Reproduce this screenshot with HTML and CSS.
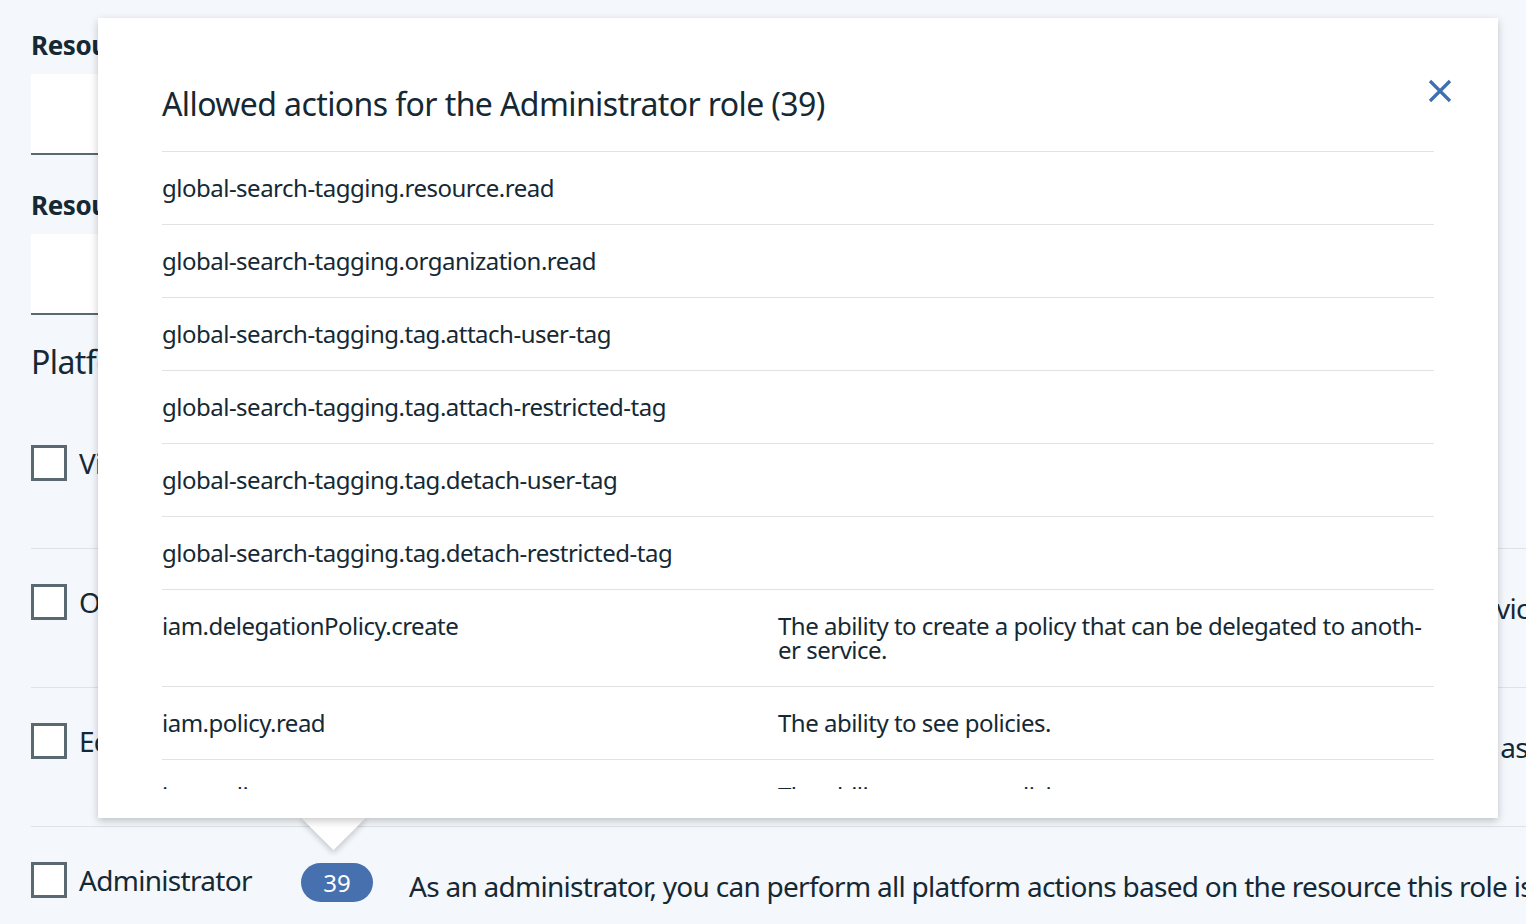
FILE: index.html
```html
<!DOCTYPE html>
<html lang="en">
<head>
<meta charset="utf-8">
<title>Allowed actions</title>
<link rel="stylesheet" href="styles.css">
</head>
<body>
<div class="page">
  <div class="field">
    <div class="label">Resource group</div>
    <div class="input"></div>
  </div>
  <div class="field">
    <div class="label">Resource</div>
    <div class="input"></div>
  </div>
  <h2 class="section">Platform access roles</h2>
  <div class="roles">
    <div class="role">
      <span class="checkbox"></span>
      <span class="name">Viewer</span>
      <span class="badge">12</span>
      <span class="desc">As a viewer, you can view service instances, but you can't modify them.</span>
    </div>
    <div class="role">
      <span class="checkbox"></span>
      <span class="name">Operator</span>
      <span class="badge">21</span>
      <span class="desc">As an operator, you can perform platform actions required to configure and operate service instances, such as viewing a service's dashboard.</span>
    </div>
    <div class="role">
      <span class="checkbox"></span>
      <span class="name">Editor</span>
      <span class="badge">30</span>
      <span class="desc">As an editor, you can perform all platform actions except for managing the account and assigning access policies.</span>
    </div>
    <div class="role">
      <span class="checkbox"></span>
      <span class="name">Administrator</span>
      <span class="badge">39</span>
      <span class="desc">As an administrator, you can perform all platform actions based on the resource this role is being assigned, including assigning access policies to other users.</span>
    </div>
  </div>
</div>

<div class="caret"></div>
<div class="modal">
  <div class="modal-header">
    <h1 class="modal-title">Allowed actions for the Administrator role (39)</h1>
    <button class="close" aria-label="Close">
      <svg width="24" height="24" viewBox="0 0 24 24"><path d="M2 2 L22 22 M22 2 L2 22" stroke="#3d70b2" stroke-width="3.2" fill="none"/></svg>
    </button>
  </div>
  <div class="actions">
    <div class="action"><span class="act">global-search-tagging.resource.read</span><span class="adesc"></span></div>
    <div class="action"><span class="act">global-search-tagging.organization.read</span><span class="adesc"></span></div>
    <div class="action"><span class="act">global-search-tagging.tag.attach-user-tag</span><span class="adesc"></span></div>
    <div class="action"><span class="act">global-search-tagging.tag.attach-restricted-tag</span><span class="adesc"></span></div>
    <div class="action"><span class="act">global-search-tagging.tag.detach-user-tag</span><span class="adesc"></span></div>
    <div class="action"><span class="act">global-search-tagging.tag.detach-restricted-tag</span><span class="adesc"></span></div>
    <div class="action"><span class="act">iam.delegationPolicy.create</span><span class="adesc">The ability to create a policy that can be delegated to anoth-<br>er service.</span></div>
    <div class="action"><span class="act">iam.policy.read</span><span class="adesc">The ability to see policies.</span></div>
    <div class="action"><span class="act">iam.policy.create</span><span class="adesc">The ability to create policies.</span></div>
    <div class="action"><span class="act">iam.policy.update</span><span class="adesc">The ability to update policies.</span></div>
  </div>
</div>
</body>
</html>
```
FILE: styles.css
```css
html, body {
  margin: 0;
  padding: 0;
  width: 1526px;
  height: 924px;
  overflow: hidden;
  background: #f4f7fb;
  color: #152935;
  font-family: "Noto Sans", "Open Sans", sans-serif;
}

.page {
  padding: 27px 0 0 31px;
}

.field {
  margin-bottom: 32px;
}

.label {
  font-size: 26px;
  font-weight: 700;
  line-height: 36px;
  margin-bottom: 11px;
  letter-spacing: -0.4px;
}

.input {
  width: 640px;
  height: 79px;
  background: #ffffff;
  border-bottom: 2px solid #5a6872;
}

.section {
  margin: -5px 0 28px 0;
  font-size: 32px;
  font-weight: 400;
  line-height: 40px;
  letter-spacing: -0.6px;
}

.roles {
  display: flex;
  flex-direction: column;
}

.role {
  height: 103px;
  padding-top: 35px;
  border-bottom: 1px solid #dfe3e6;
  display: flex;
  align-items: flex-start;
  white-space: nowrap;
}

.checkbox {
  width: 30px;
  height: 30px;
  border: 3px solid #5a6872;
  background: #ffffff;
  flex: none;
}

.name {
  width: 222px;
  margin-left: 12px;
  font-size: 28px;
  line-height: 36px;
  letter-spacing: -0.7px;
  flex: none;
}

.badge {
  flex: none;
  width: 72px;
  height: 39px;
  margin-top: 1px;
  border-radius: 20px;
  background: #4670ae;
  color: #ffffff;
  font-size: 24px;
  line-height: 39px;
  text-align: center;
}

.desc {
  margin-left: 36px;
  margin-top: 6px;
  font-size: 28px;
  line-height: 36px;
  letter-spacing: -0.72px;
}

.modal {
  position: absolute;
  left: 98px;
  top: 18px;
  width: 1400px;
  height: 800px;
  box-sizing: border-box;
  padding: 0 64px 29px 64px;
  background: #ffffff;
  box-shadow: 0 3px 8px 0 rgba(0, 0, 0, 0.22);
  display: flex;
  flex-direction: column;
  z-index: 2;
}

.caret {
  position: absolute;
  left: 311px;
  top: 796px;
  width: 45px;
  height: 45px;
  background: #ffffff;
  transform: rotate(45deg);
  box-shadow: 2px 2px 6px 0 rgba(0, 0, 0, 0.2);
  z-index: 1;
}

.modal-header {
  position: relative;
  padding: 66px 0 27px 0;
}

.modal-title {
  margin: 0;
  font-size: 32px;
  font-weight: 400;
  line-height: 40px;
  letter-spacing: -0.6px;
}

.close {
  position: absolute;
  right: -18px;
  top: 61px;
  width: 24px;
  height: 24px;
  padding: 0;
  border: 0;
  background: transparent;
}

.close svg {
  display: block;
}

.actions {
  flex: 1;
  overflow: hidden;
}

.action {
  display: grid;
  grid-template-columns: 616px 1fr;
  border-top: 1px solid #dfe3e6;
  padding: 24px 0;
  font-size: 24px;
  line-height: 24px;
  letter-spacing: -0.5px;
}

.adesc {
  white-space: nowrap;
}
```
